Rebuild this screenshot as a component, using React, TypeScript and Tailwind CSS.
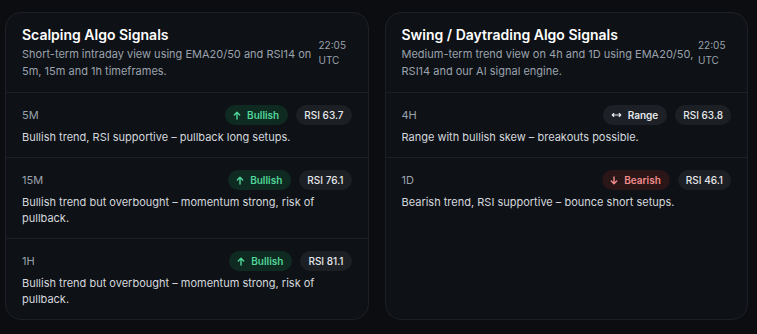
import React from "react";

type Trend = "bull" | "bear" | "range";
type Row = { tf: string; trend: Trend; rsi: string; text: string };

const ArrowUp = () => (
  <svg width="8" height="9" viewBox="0 0 8 9" fill="none" stroke="currentColor" strokeWidth="1.4" strokeLinecap="round" strokeLinejoin="round">
    <path d="M4 8V1.3M1.3 3.9L4 1.2L6.7 3.9" />
  </svg>
);
const ArrowDown = () => (
  <svg width="8" height="9" viewBox="0 0 8 9" fill="none" stroke="currentColor" strokeWidth="1.4" strokeLinecap="round" strokeLinejoin="round">
    <path d="M4 1V7.7M1.3 5.1L4 7.8L6.7 5.1" />
  </svg>
);
const ArrowLR = () => (
  <svg width="11" height="8" viewBox="0 0 11 8" fill="none" stroke="currentColor" strokeWidth="1.1" strokeLinecap="round" strokeLinejoin="round">
    <path d="M1.2 4H9.8M2.8 2.5L1.2 4L2.8 5.5M8.2 2.5L9.8 4L8.2 5.5" />
  </svg>
);

function TrendBadge({ trend }: { trend: Trend }) {
  if (trend === "bull")
    return (
      <span className="flex h-5 items-center gap-[6px] rounded-full bg-[#0f2a21] pl-[8px] pr-[9px] text-[10px] font-semibold text-[#4fd69a]">
        <ArrowUp />
        Bullish
      </span>
    );
  if (trend === "bear")
    return (
      <span className="flex h-5 items-center gap-[6px] rounded-full bg-[#2a1517] pl-[8px] pr-[9px] text-[10px] font-semibold text-[#f08c8c]">
        <ArrowDown />
        Bearish
      </span>
    );
  return (
    <span className="flex h-5 items-center gap-[6px] rounded-full bg-[#1d2127] pl-[8px] pr-[9px] text-[10px] font-semibold text-[#e6e8eb]">
      <ArrowLR />
      Range
    </span>
  );
}

function Card({ title, sub, rows }: { title: string; sub: string; rows: Row[] }) {
  return (
    <div className="flex flex-col rounded-2xl border border-[#1d2026] bg-[#0e1115]">
      <div className="flex items-center gap-1 border-b border-[#1d2026] px-4 py-3">
        <div className="min-w-0 flex-1">
          <div className="text-[14px] font-semibold leading-5 text-white">{title}</div>
          <div className="mt-[1px] text-[11px] leading-[17px] text-[#9aa2ad]">{sub}</div>
        </div>
        <div className="w-[33px] shrink-0 text-[10px] leading-[15px] text-[#9aa2ad]">
          22:05
          <br />
          UTC
        </div>
      </div>
      {rows.map((r, i) => (
        <div
          key={r.tf}
          className={`flex flex-col gap-1 px-4 py-3 ${i < rows.length - 1 ? "border-b border-[#1d2026]" : ""}`}
        >
          <div className="flex h-5 items-center">
            <div className="flex-1 text-[11px] text-[#9aa2ad]">{r.tf}</div>
            <div className="flex items-center gap-2">
              <TrendBadge trend={r.trend} />
              <span className="flex h-5 items-center rounded-full bg-[#1c1f24] px-2 text-[10px] font-medium text-[#e6e8eb]">
                RSI {r.rsi}
              </span>
            </div>
          </div>
          <div className="text-[11px] leading-4 text-[#d4d8de]">{r.text}</div>
        </div>
      ))}
    </div>
  );
}

export default function App() {
  return (
    <div
      className="min-h-[334px] bg-[#0b0d10] pl-[5px] pr-[9px] pt-3"
      style={{ fontFamily: "Inter, 'Noto Sans', sans-serif" }}
    >
      <div className="grid h-[308px] grid-cols-2 items-stretch gap-4">
        <Card
          title="Scalping Algo Signals"
          sub="Short-term intraday view using EMA20/50 and RSI14 on 5m, 15m and 1h timeframes."
          rows={[
            { tf: "5M", trend: "bull", rsi: "63.7", text: "Bullish trend, RSI supportive – pullback long setups." },
            { tf: "15M", trend: "bull", rsi: "76.1", text: "Bullish trend but overbought – momentum strong, risk of pullback." },
            { tf: "1H", trend: "bull", rsi: "81.1", text: "Bullish trend but overbought – momentum strong, risk of pullback." },
          ]}
        />
        <Card
          title="Swing / Daytrading Algo Signals"
          sub="Medium-term trend view on 4h and 1D using EMA20/50, RSI14 and our AI signal engine."
          rows={[
            { tf: "4H", trend: "range", rsi: "63.8", text: "Range with bullish skew – breakouts possible." },
            { tf: "1D", trend: "bear", rsi: "46.1", text: "Bearish trend, RSI supportive – bounce short setups." },
          ]}
        />
      </div>
    </div>
  );
}
